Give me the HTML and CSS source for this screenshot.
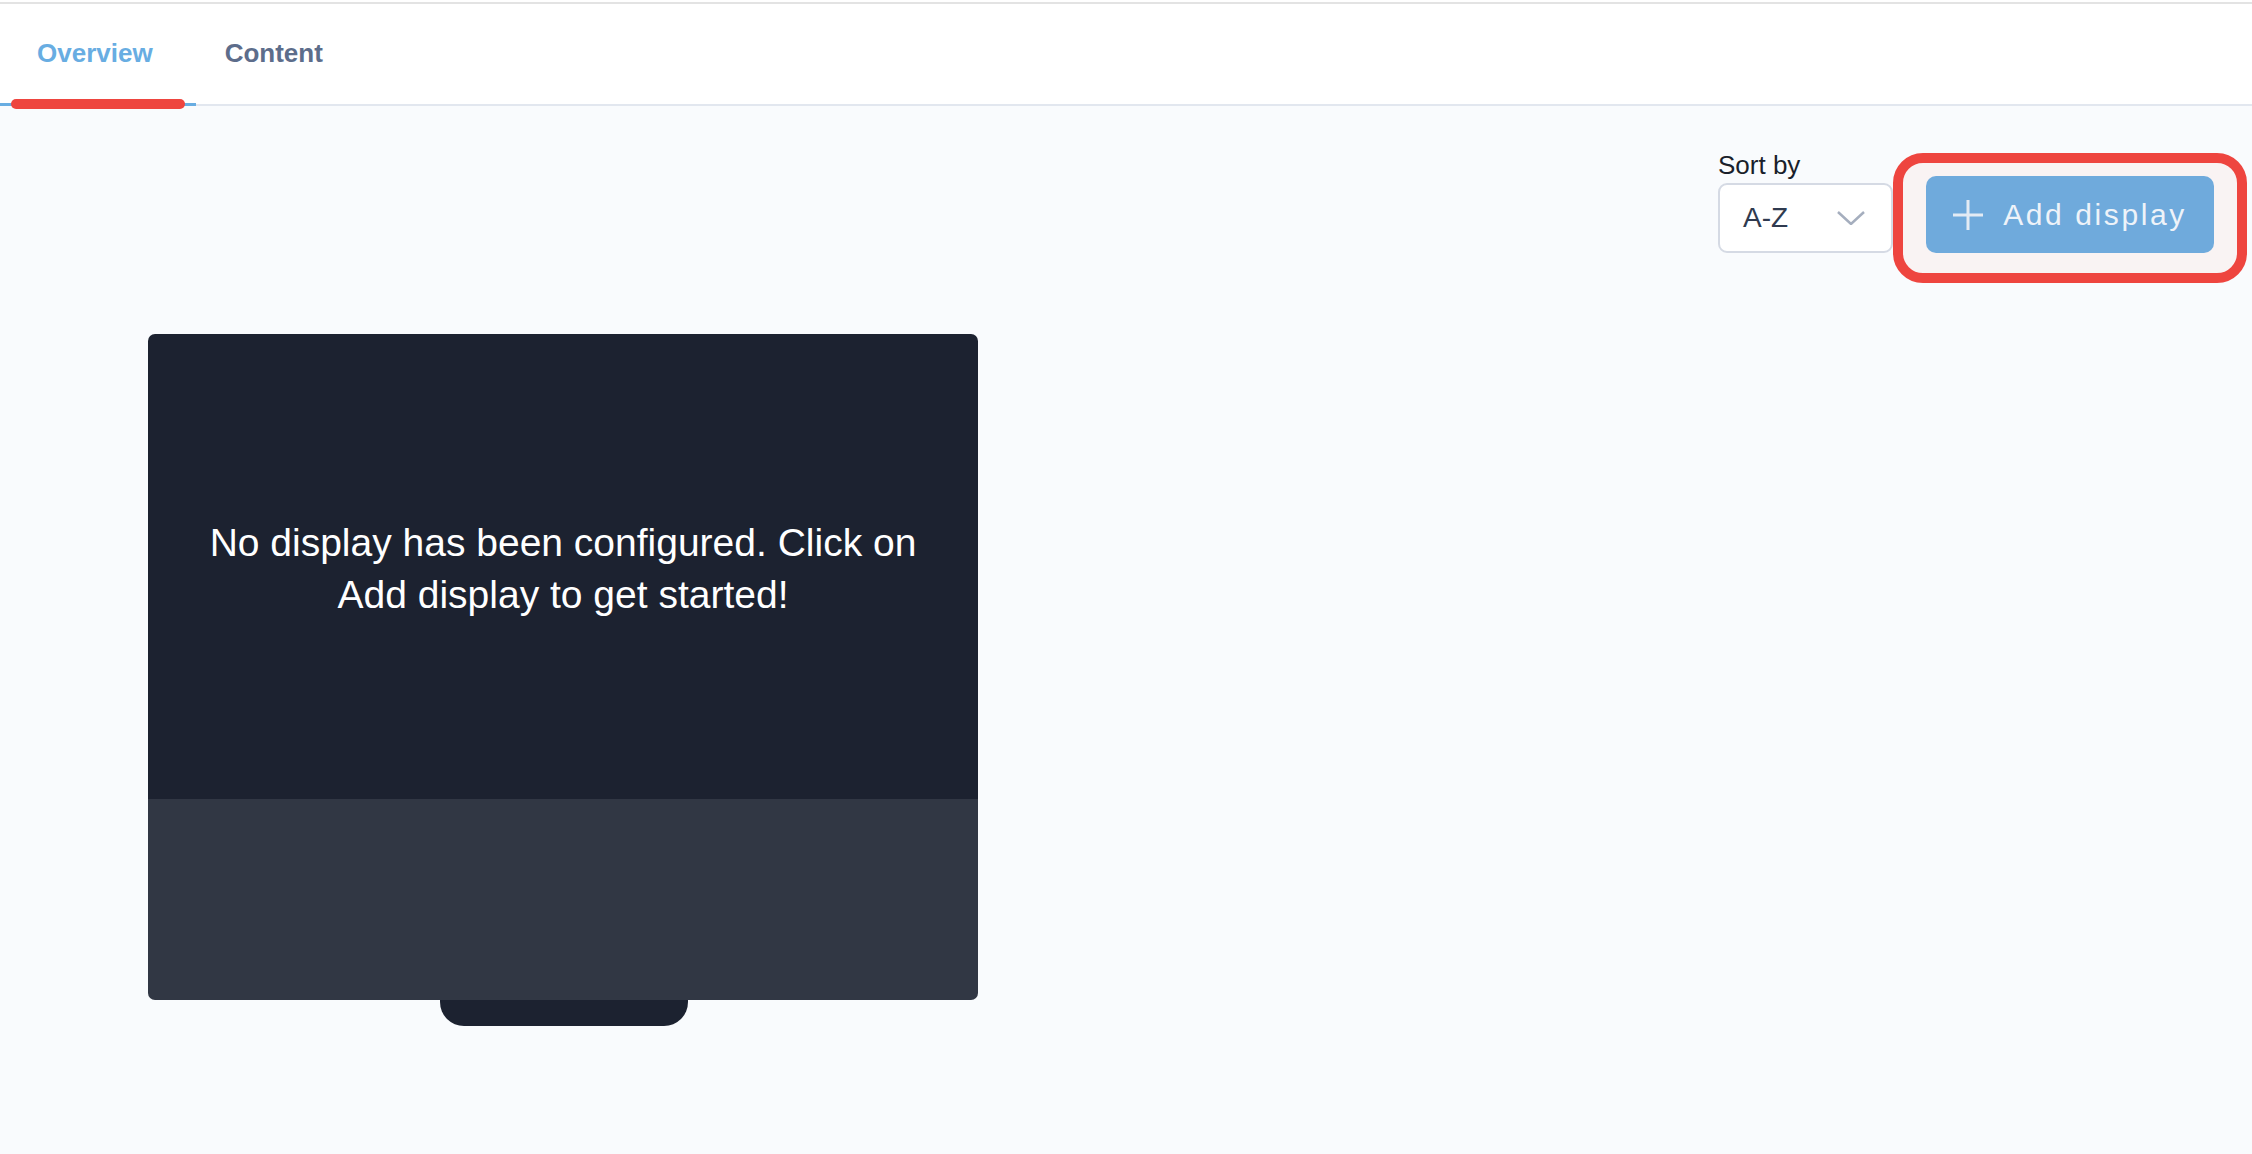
FILE: index.html
```html
<!DOCTYPE html>
<html lang="en">

<head>
    <meta charset="UTF-8">
    <meta name="viewport" content="width=device-width, initial-scale=1.0">
    <title>Displays</title>
    <link rel="stylesheet" href="styles.css">
</head>

<body>
    <header class="top-bar">
        <nav class="tabs">
            <a class="tab active" href="#">
                Overview
                <span class="mark-line"></span>
            </a>
            <a class="tab" href="#">Content</a>
        </nav>
    </header>

    <main class="page">
        <div class="toolbar">
            <div class="sort">
                <label class="sort-label" for="sort-select">Sort by</label>
                <div class="select" id="sort-select">
                    <span>A-Z</span>
                    <svg class="chevron" viewBox="0 0 28 14">
                        <path d="M1 1l13 12L27 1"></path>
                    </svg>
                </div>
            </div>
            <div class="mark-box">
                <button class="add-button">
                    <svg class="plus" viewBox="0 0 30 30">
                        <path d="M15 0v30M0 15h30"></path>
                    </svg>
                    Add display
                </button>
            </div>
        </div>

        <div class="display">
            <div class="screen">
                <p class="empty-text">No display has been configured. Click on<br>Add display to get started!</p>
            </div>
            <div class="bezel"></div>
        </div>
        <div class="stand"></div>
    </main>
</body>

</html>
```

FILE: styles.css
```css
body {
    margin: 0;
    padding: 0;
    font-family: "Liberation Sans", Arial, sans-serif;
    background: #f9fbfd;
}

.top-bar {
    background: #fff;
    padding-top: 2px;
}

.tabs {
    display: flex;
    border-top: 2px solid #e3e3e3;
    border-bottom: 2px solid #e2e7ef;
}

.tab {
    position: relative;
    height: 99px;
    display: flex;
    align-items: center;
    padding: 0 43px 0 37px;
    font-size: 26px;
    font-weight: bold;
    color: #5d6d8b;
    text-decoration: none;
    border-bottom: 3px solid transparent;
    margin-bottom: -2px;
}

.tab + .tab {
    padding-left: 29px;
}

.tab.active {
    color: #68ade2;
    border-bottom-color: #68ade2;
}

/* red annotation over the active tab */
.mark-line {
    position: absolute;
    left: 11px;
    top: 95px;
    width: 174px;
    height: 10px;
    border-radius: 5px;
    background: #ee453f;
}

.page {
    padding: 44px 5px 60px 148px;
}

.toolbar {
    display: flex;
    justify-content: flex-end;
    align-items: flex-start;
}

.sort {
    display: flex;
    flex-direction: column;
}

.sort-label {
    font-size: 26px;
    line-height: 30px;
    color: #1a1f2b;
}

.select {
    width: 171px;
    height: 66px;
    margin-top: 3px;
    border: 2px solid #d5dae4;
    border-radius: 9px;
    background: #fff;
    display: flex;
    align-items: center;
    justify-content: space-between;
    padding: 0 0 0 23px;
    font-size: 28px;
    color: #2f3a4f;
    box-sizing: content-box;
    width: 148px;
}

.chevron {
    width: 28px;
    height: 14px;
    margin-right: 26px;
    fill: none;
    stroke: #a5aebe;
    stroke-width: 2.5;
}

/* red annotation round the button */
.mark-box {
    margin-top: 3px;
    border: 10px solid #ee453f;
    border-radius: 30px;
    background: #f9f3f3;
    padding: 13px 23px 20px 23px;
}

.add-button {
    width: 288px;
    height: 77px;
    border: none;
    border-radius: 10px;
    background: #6faadc;
    color: #eef3f9;
    font-family: inherit;
    font-size: 30px;
    letter-spacing: 2.6px;
    display: flex;
    align-items: center;
    justify-content: center;
    gap: 20px;
    cursor: pointer;
}

.plus {
    width: 30px;
    height: 30px;
    stroke: #e3ebf4;
    stroke-width: 3;
}

.display {
    width: 830px;
    margin-top: 51px;
    border-radius: 7px;
    overflow: hidden;
}

.screen {
    height: 465px;
    background: #1c2230;
    display: flex;
    align-items: center;
    justify-content: center;
}

.empty-text {
    margin: 4px 0 0;
    color: #fff;
    font-size: 39px;
    line-height: 52px;
    text-align: center;
}

.bezel {
    height: 201px;
    background: #313744;
}

.stand {
    width: 248px;
    height: 26px;
    margin-left: 292px;
    background: #1c2230;
    border-radius: 0 0 24px 24px;
}
```
